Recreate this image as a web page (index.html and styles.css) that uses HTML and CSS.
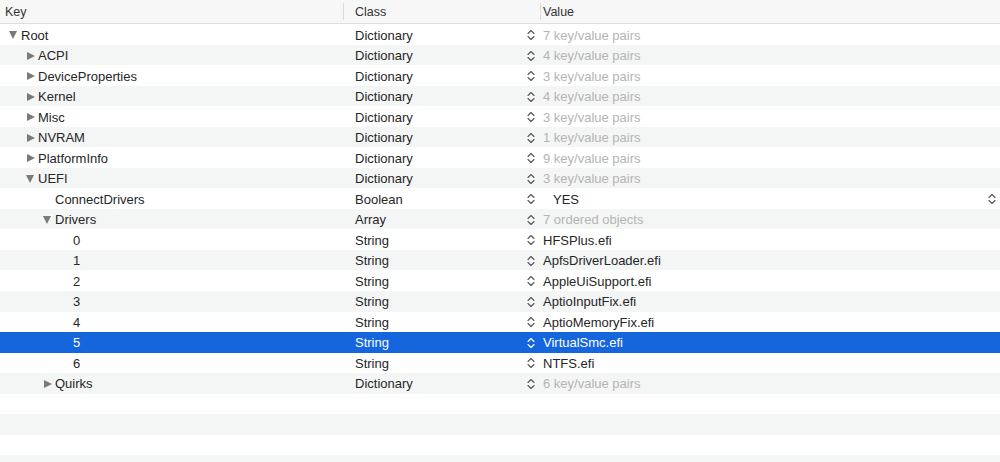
FILE: index.html
```html
<!DOCTYPE html>
<html>
<head>
<meta charset="utf-8">
<link rel="stylesheet" href="styles.css">
</head>
<body>
<div class="outline">
  <div class="header">
    <div class="hcell key">Key</div>
    <div class="hcell cls"><span class="sep"></span>Class</div>
    <div class="hcell val"><span class="sep"></span>Value</div>
  </div>
  <div class="rows">
    <div class="row"><div class="c key d0"><span class="tri open"></span>Root</div><div class="c cls">Dictionary</div><div class="c val"><svg class="step" viewBox="0 0 8 12"><path d="M1 4.5 L4 1.5 L7 4.5 M1 7.5 L4 10.5 L7 7.5"/></svg><span class="dim">7 key/value pairs</span></div></div>
    <div class="row"><div class="c key d1"><span class="tri"></span>ACPI</div><div class="c cls">Dictionary</div><div class="c val"><svg class="step" viewBox="0 0 8 12"><path d="M1 4.5 L4 1.5 L7 4.5 M1 7.5 L4 10.5 L7 7.5"/></svg><span class="dim">4 key/value pairs</span></div></div>
    <div class="row"><div class="c key d1"><span class="tri"></span>DeviceProperties</div><div class="c cls">Dictionary</div><div class="c val"><svg class="step" viewBox="0 0 8 12"><path d="M1 4.5 L4 1.5 L7 4.5 M1 7.5 L4 10.5 L7 7.5"/></svg><span class="dim">3 key/value pairs</span></div></div>
    <div class="row"><div class="c key d1"><span class="tri"></span>Kernel</div><div class="c cls">Dictionary</div><div class="c val"><svg class="step" viewBox="0 0 8 12"><path d="M1 4.5 L4 1.5 L7 4.5 M1 7.5 L4 10.5 L7 7.5"/></svg><span class="dim">4 key/value pairs</span></div></div>
    <div class="row"><div class="c key d1"><span class="tri"></span>Misc</div><div class="c cls">Dictionary</div><div class="c val"><svg class="step" viewBox="0 0 8 12"><path d="M1 4.5 L4 1.5 L7 4.5 M1 7.5 L4 10.5 L7 7.5"/></svg><span class="dim">3 key/value pairs</span></div></div>
    <div class="row"><div class="c key d1"><span class="tri"></span>NVRAM</div><div class="c cls">Dictionary</div><div class="c val"><svg class="step" viewBox="0 0 8 12"><path d="M1 4.5 L4 1.5 L7 4.5 M1 7.5 L4 10.5 L7 7.5"/></svg><span class="dim">1 key/value pairs</span></div></div>
    <div class="row"><div class="c key d1"><span class="tri"></span>PlatformInfo</div><div class="c cls">Dictionary</div><div class="c val"><svg class="step" viewBox="0 0 8 12"><path d="M1 4.5 L4 1.5 L7 4.5 M1 7.5 L4 10.5 L7 7.5"/></svg><span class="dim">9 key/value pairs</span></div></div>
    <div class="row"><div class="c key d1"><span class="tri open"></span>UEFI</div><div class="c cls">Dictionary</div><div class="c val"><svg class="step" viewBox="0 0 8 12"><path d="M1 4.5 L4 1.5 L7 4.5 M1 7.5 L4 10.5 L7 7.5"/></svg><span class="dim">3 key/value pairs</span></div></div>
    <div class="row"><div class="c key d2">ConnectDrivers</div><div class="c cls">Boolean</div><div class="c val"><svg class="step" viewBox="0 0 8 12"><path d="M1 4.5 L4 1.5 L7 4.5 M1 7.5 L4 10.5 L7 7.5"/></svg><span class="yes">YES</span><svg class="step popup" viewBox="0 0 8 12"><path d="M1 4.5 L4 1.5 L7 4.5 M1 7.5 L4 10.5 L7 7.5"/></svg></div></div>
    <div class="row"><div class="c key d2b"><span class="tri open"></span>Drivers</div><div class="c cls">Array</div><div class="c val"><svg class="step" viewBox="0 0 8 12"><path d="M1 4.5 L4 1.5 L7 4.5 M1 7.5 L4 10.5 L7 7.5"/></svg><span class="dim">7 ordered objects</span></div></div>
    <div class="row"><div class="c key d3">0</div><div class="c cls">String</div><div class="c val"><svg class="step" viewBox="0 0 8 12"><path d="M1 4.5 L4 1.5 L7 4.5 M1 7.5 L4 10.5 L7 7.5"/></svg><span>HFSPlus.efi</span></div></div>
    <div class="row"><div class="c key d3">1</div><div class="c cls">String</div><div class="c val"><svg class="step" viewBox="0 0 8 12"><path d="M1 4.5 L4 1.5 L7 4.5 M1 7.5 L4 10.5 L7 7.5"/></svg><span>ApfsDriverLoader.efi</span></div></div>
    <div class="row"><div class="c key d3">2</div><div class="c cls">String</div><div class="c val"><svg class="step" viewBox="0 0 8 12"><path d="M1 4.5 L4 1.5 L7 4.5 M1 7.5 L4 10.5 L7 7.5"/></svg><span>AppleUiSupport.efi</span></div></div>
    <div class="row"><div class="c key d3">3</div><div class="c cls">String</div><div class="c val"><svg class="step" viewBox="0 0 8 12"><path d="M1 4.5 L4 1.5 L7 4.5 M1 7.5 L4 10.5 L7 7.5"/></svg><span>AptioInputFix.efi</span></div></div>
    <div class="row"><div class="c key d3">4</div><div class="c cls">String</div><div class="c val"><svg class="step" viewBox="0 0 8 12"><path d="M1 4.5 L4 1.5 L7 4.5 M1 7.5 L4 10.5 L7 7.5"/></svg><span>AptioMemoryFix.efi</span></div></div>
    <div class="row selected"><div class="c key d3">5</div><div class="c cls">String</div><div class="c val"><svg class="step" viewBox="0 0 8 12"><path d="M1 4.5 L4 1.5 L7 4.5 M1 7.5 L4 10.5 L7 7.5"/></svg><span>VirtualSmc.efi</span></div></div>
    <div class="row"><div class="c key d3">6</div><div class="c cls">String</div><div class="c val"><svg class="step" viewBox="0 0 8 12"><path d="M1 4.5 L4 1.5 L7 4.5 M1 7.5 L4 10.5 L7 7.5"/></svg><span>NTFS.efi</span></div></div>
    <div class="row"><div class="c key d2b"><span class="tri"></span>Quirks</div><div class="c cls">Dictionary</div><div class="c val"><svg class="step" viewBox="0 0 8 12"><path d="M1 4.5 L4 1.5 L7 4.5 M1 7.5 L4 10.5 L7 7.5"/></svg><span class="dim">6 key/value pairs</span></div></div>
    <div class="row empty"></div>
    <div class="row empty"></div>
    <div class="row empty"></div>
    <div class="row empty"></div>
  </div>
</div>
</body>
</html>
```

FILE: styles.css
```css
html, body {
  margin: 0;
  padding: 0;
  background: #ffffff;
  overflow: hidden;
}
.outline {
  width: 1000px;
  height: 462px;
  overflow: hidden;
  font-family: "Liberation Sans", Arial, sans-serif;
  font-size: 13px;
  color: #262626;
}
.header {
  display: grid;
  grid-template-columns: 343px 197px 1fr;
  height: 23px;
  background: #f7f7f7;
  border-bottom: 1px solid #dedede;
  box-sizing: content-box;
  color: #333;
}
.hcell {
  position: relative;
  display: flex;
  align-items: center;
  font-size: 12.5px;
}
.hcell.key { padding-left: 5px; }
.hcell.cls { padding-left: 12px; }
.hcell.val { padding-left: 3px; }
.sep {
  position: absolute;
  left: 0;
  top: 3px;
  bottom: 3px;
  width: 1px;
  background: #dcdcdc;
}
.rows {
  padding-top: 0.3px;
}
.row {
  display: grid;
  grid-template-columns: 343px 197px 1fr;
  height: 20.53px;
  align-items: center;
}
.row:nth-child(even) { background: #f4f5f5; }
.row.selected {
  background: #1565dc;
  color: #ffffff;
}
.c {
  display: flex;
  align-items: center;
  white-space: nowrap;
  padding-top: 1px;
}
.key.d0 { padding-left: 9px; }
.key.d1 { padding-left: 26px; }
.key.d2 { padding-left: 55px; }
.key.d2b { padding-left: 43px; }
.key.d3 { padding-left: 73px; }
.cls { padding-left: 12px; }
.val { padding-left: 0; }
.tri {
  display: inline-block;
  width: 0;
  height: 0;
  margin-right: 3px;
  border-top: 4.5px solid transparent;
  border-bottom: 4.5px solid transparent;
  border-left: 8px solid #7a7a7a;
  margin-left: 1px;
}
.tri.open {
  border-left: 4.5px solid transparent;
  border-right: 4.5px solid transparent;
  border-top: 8px solid #7a7a7a;
  border-bottom: 0;
  margin-left: 0;
  margin-right: 4px;
}
.step {
  width: 8px;
  height: 12px;
  margin-left: -13px;
  margin-right: 8px;
  flex: none;
}
.step path {
  fill: none;
  stroke: #555;
  stroke-width: 1.1;
  stroke-linecap: round;
  stroke-linejoin: round;
}
.selected .step path { stroke: #ffffff; }
.dim { color: #b4b4b4; }
.yes { margin-left: 10px; }
.step.popup {
  margin-left: auto;
  margin-right: 4px;
}
```
